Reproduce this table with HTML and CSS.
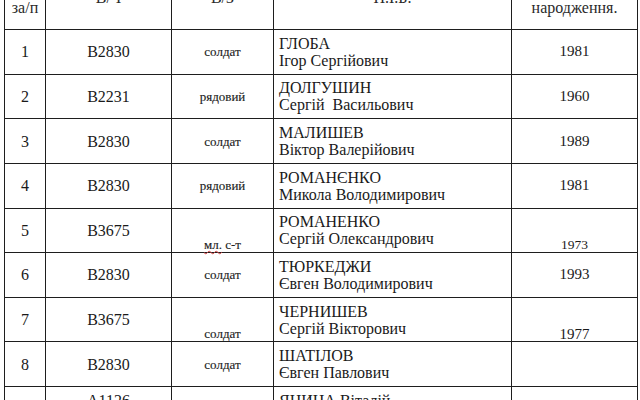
FILE: index.html
```html
<!DOCTYPE html>
<html lang="uk">
<head>
<meta charset="utf-8">
<title>Список</title>
<link rel="stylesheet" href="styles.css">
</head>
<body>
<div class="page">
<table class="roster">
<colgroup>
<col class="c-num"><col class="c-unit"><col class="c-rank"><col class="c-name"><col class="c-year">
</colgroup>
<thead>
<tr class="head">
<th>№<br>за/п</th><th class="single">В/Ч</th><th class="single">В/З</th><th class="single">П.І.Б.</th><th>Рік<br>народження.</th>
</tr>
</thead>
<tbody>
<tr><td class="num">1</td><td class="unit">В2830</td><td class="rank">солдат</td><td class="name">ГЛОБА<br>Ігор Сергійович</td><td class="year">1981</td></tr>
<tr><td class="num">2</td><td class="unit">В2231</td><td class="rank">рядовий</td><td class="name">ДОЛГУШИН<br>Сергій&nbsp; Васильович</td><td class="year">1960</td></tr>
<tr><td class="num">3</td><td class="unit">В2830</td><td class="rank">солдат</td><td class="name">МАЛИШЕВ<br>Віктор Валерійович</td><td class="year">1989</td></tr>
<tr><td class="num">4</td><td class="unit">В2830</td><td class="rank">рядовий</td><td class="name">РОМАНЄНКО<br>Микола Володимирович</td><td class="year">1981</td></tr>
<tr><td class="num">5</td><td class="unit">В3675</td><td class="rank bottom"><span class="typo">мл.</span> с-т</td><td class="name">РОМАНЕНКО<br>Сергій Олександрович</td><td class="year small bottom">1973</td></tr>
<tr><td class="num">6</td><td class="unit">В2830</td><td class="rank">солдат</td><td class="name">ТЮРКЕДЖИ<br>Євген Володимирович</td><td class="year">1993</td></tr>
<tr><td class="num">7</td><td class="unit">В3675</td><td class="rank bottom">солдат</td><td class="name">ЧЕРНИШЕВ<br>Сергій Вікторович</td><td class="year bottom">1977</td></tr>
<tr><td class="num">8</td><td class="unit">В2830</td><td class="rank">солдат</td><td class="name">ШАТІЛОВ<br>Євген Павлович</td><td class="year"></td></tr>
<tr><td class="num">9</td><td class="unit top">А1126</td><td class="rank"></td><td class="name top">ЯЦИНА Віталій<br>Олександрович</td><td class="year"></td></tr>
</tbody>
</table>
</div>
</body>
</html>
```

FILE: styles.css
```css
html, body {
  margin: 0;
  padding: 0;
  height: 100%;
  overflow: hidden;
  background: #ffffff;
}

.page {
  padding-left: 4px;
}

.roster {
  border-collapse: collapse;
  table-layout: fixed;
  width: 633px;
  margin-top: -36px;
  font-family: "Liberation Serif", "Times New Roman", serif;
  font-size: 16px;
  line-height: 17px;
  color: #1a1a1a;
}

.c-num { width: 41px; }
.c-unit { width: 126px; }
.c-rank { width: 102px; }
.c-name { width: 238px; }
.c-year { width: 126px; }

.roster th,
.roster td {
  border: 1px solid #1e1e1e;
  padding: 0 4px;
  text-align: center;
  vertical-align: middle;
  font-weight: normal;
}

.roster th {
  padding-top: 3px;
  color: #2a2a2a;
}

.roster th.single {
  padding-top: 0;
}

.head {
  height: 65px;
}

tbody tr {
  height: 44.625px;
}

.roster td.name {
  text-align: left;
  padding-left: 5px;
}

.rank {
  font-size: 13px;
  color: #222222;
  -webkit-text-stroke: 0.15px #222222;
}

.year {
  font-size: 15px;
}

.roster td.bottom {
  vertical-align: bottom;
  padding-bottom: 0;
  line-height: 14px;
}

.year.small {
  font-size: 13.5px;
}

.roster td.top {
  vertical-align: top;
  padding-top: 5px;
}

.typo {
  text-decoration: underline wavy #d04040;
  text-decoration-thickness: 1px;
}
```
